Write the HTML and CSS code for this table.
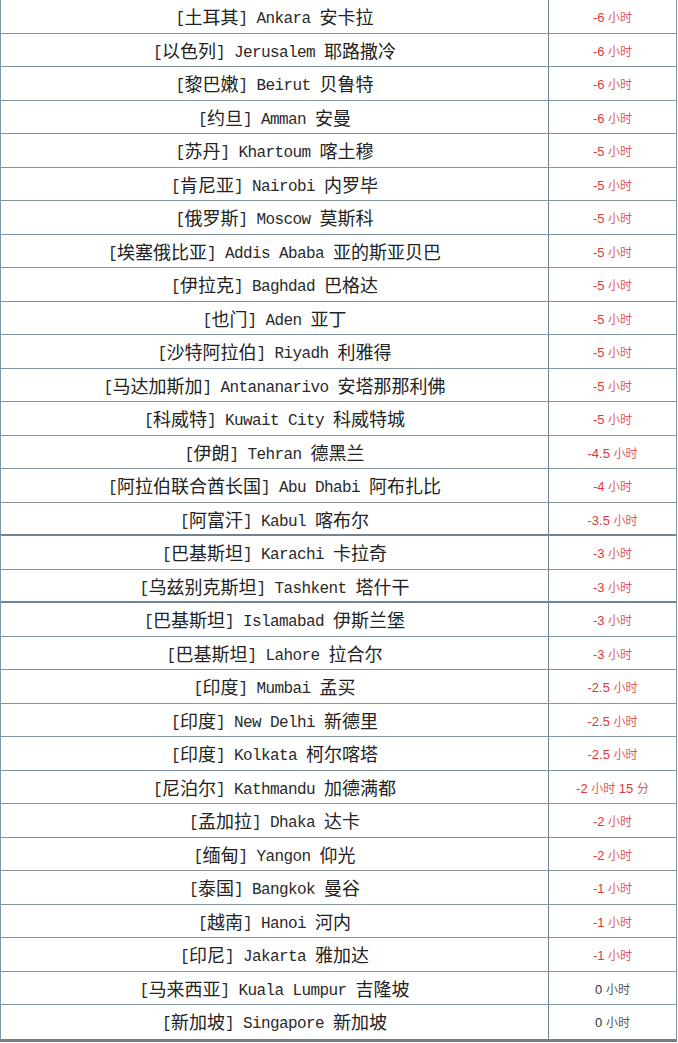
FILE: index.html
```html
<!DOCTYPE html>
<html lang="zh-CN">
<head>
<meta charset="utf-8">
<title>时差表</title>
<link rel="stylesheet" href="styles.css">
</head>
<body>
<div class="table">
  <div class="row"><div class="city"><span class="en">[</span>土耳其<span class="en">] Ankara </span>安卡拉</div><div class="diff">-6 <span class="cn">小时</span></div></div>
  <div class="row"><div class="city"><span class="en">[</span>以色列<span class="en">] Jerusalem </span>耶路撒冷</div><div class="diff">-6 <span class="cn">小时</span></div></div>
  <div class="row"><div class="city"><span class="en">[</span>黎巴嫩<span class="en">] Beirut </span>贝鲁特</div><div class="diff">-6 <span class="cn">小时</span></div></div>
  <div class="row"><div class="city"><span class="en">[</span>约旦<span class="en">] Amman </span>安曼</div><div class="diff">-6 <span class="cn">小时</span></div></div>
  <div class="row"><div class="city"><span class="en">[</span>苏丹<span class="en">] Khartoum </span>喀土穆</div><div class="diff">-5 <span class="cn">小时</span></div></div>
  <div class="row"><div class="city"><span class="en">[</span>肯尼亚<span class="en">] Nairobi </span>内罗毕</div><div class="diff">-5 <span class="cn">小时</span></div></div>
  <div class="row"><div class="city"><span class="en">[</span>俄罗斯<span class="en">] Moscow </span>莫斯科</div><div class="diff">-5 <span class="cn">小时</span></div></div>
  <div class="row"><div class="city"><span class="en">[</span>埃塞俄比亚<span class="en">] Addis Ababa </span>亚的斯亚贝巴</div><div class="diff">-5 <span class="cn">小时</span></div></div>
  <div class="row"><div class="city"><span class="en">[</span>伊拉克<span class="en">] Baghdad </span>巴格达</div><div class="diff">-5 <span class="cn">小时</span></div></div>
  <div class="row"><div class="city"><span class="en">[</span>也门<span class="en">] Aden </span>亚丁</div><div class="diff">-5 <span class="cn">小时</span></div></div>
  <div class="row"><div class="city"><span class="en">[</span>沙特阿拉伯<span class="en">] Riyadh </span>利雅得</div><div class="diff">-5 <span class="cn">小时</span></div></div>
  <div class="row"><div class="city"><span class="en">[</span>马达加斯加<span class="en">] Antananarivo </span>安塔那那利佛</div><div class="diff">-5 <span class="cn">小时</span></div></div>
  <div class="row"><div class="city"><span class="en">[</span>科威特<span class="en">] Kuwait City </span>科威特城</div><div class="diff">-5 <span class="cn">小时</span></div></div>
  <div class="row"><div class="city"><span class="en">[</span>伊朗<span class="en">] Tehran </span>德黑兰</div><div class="diff">-4.5 <span class="cn">小时</span></div></div>
  <div class="row"><div class="city"><span class="en">[</span>阿拉伯联合酋长国<span class="en">] Abu Dhabi </span>阿布扎比</div><div class="diff">-4 <span class="cn">小时</span></div></div>
  <div class="row thick"><div class="city"><span class="en">[</span>阿富汗<span class="en">] Kabul </span>喀布尔</div><div class="diff">-3.5 <span class="cn">小时</span></div></div>
  <div class="row"><div class="city"><span class="en">[</span>巴基斯坦<span class="en">] Karachi </span>卡拉奇</div><div class="diff">-3 <span class="cn">小时</span></div></div>
  <div class="row thick"><div class="city"><span class="en">[</span>乌兹别克斯坦<span class="en">] Tashkent </span>塔什干</div><div class="diff">-3 <span class="cn">小时</span></div></div>
  <div class="row"><div class="city"><span class="en">[</span>巴基斯坦<span class="en">] Islamabad </span>伊斯兰堡</div><div class="diff">-3 <span class="cn">小时</span></div></div>
  <div class="row"><div class="city"><span class="en">[</span>巴基斯坦<span class="en">] Lahore </span>拉合尔</div><div class="diff">-3 <span class="cn">小时</span></div></div>
  <div class="row"><div class="city"><span class="en">[</span>印度<span class="en">] Mumbai </span>孟买</div><div class="diff">-2.5 <span class="cn">小时</span></div></div>
  <div class="row"><div class="city"><span class="en">[</span>印度<span class="en">] New Delhi </span>新德里</div><div class="diff">-2.5 <span class="cn">小时</span></div></div>
  <div class="row"><div class="city"><span class="en">[</span>印度<span class="en">] Kolkata </span>柯尔喀塔</div><div class="diff">-2.5 <span class="cn">小时</span></div></div>
  <div class="row"><div class="city"><span class="en">[</span>尼泊尔<span class="en">] Kathmandu </span>加德满都</div><div class="diff">-2 <span class="cn">小时</span> 15 <span class="cn">分</span></div></div>
  <div class="row"><div class="city"><span class="en">[</span>孟加拉<span class="en">] Dhaka </span>达卡</div><div class="diff">-2 <span class="cn">小时</span></div></div>
  <div class="row"><div class="city"><span class="en">[</span>缅甸<span class="en">] Yangon </span>仰光</div><div class="diff">-2 <span class="cn">小时</span></div></div>
  <div class="row"><div class="city"><span class="en">[</span>泰国<span class="en">] Bangkok </span>曼谷</div><div class="diff">-1 <span class="cn">小时</span></div></div>
  <div class="row"><div class="city"><span class="en">[</span>越南<span class="en">] Hanoi </span>河内</div><div class="diff">-1 <span class="cn">小时</span></div></div>
  <div class="row"><div class="city"><span class="en">[</span>印尼<span class="en">] Jakarta </span>雅加达</div><div class="diff">-1 <span class="cn">小时</span></div></div>
  <div class="row"><div class="city"><span class="en">[</span>马来西亚<span class="en">] Kuala Lumpur </span>吉隆坡</div><div class="diff zero">0 <span class="cn">小时</span></div></div>
  <div class="row last"><div class="city"><span class="en">[</span>新加坡<span class="en">] Singapore </span>新加坡</div><div class="diff zero">0 <span class="cn">小时</span></div></div>
</div>
</body>
</html>
```

FILE: styles.css
```css
html, body {
  margin: 0;
  padding: 0;
  background: #ffffff;
}

.table {
  width: 677px;
  box-sizing: border-box;
  border-left: 1px solid #8197a8;
  border-right: 1px solid #8197a8;
  border-bottom: 3px solid #6f7f8a;
}

.row {
  display: grid;
  grid-template-columns: 548px 127px;
  height: 33.5px;
  box-sizing: border-box;
  border-bottom: 1px solid #8197a8;
}

.row.thick {
  border-bottom: 2px solid #6f8494;
}

.row.last {
  border-bottom: none;
}

.city {
  display: block;
  text-align: center;
  line-height: 33px;
  border-right: 1px solid #6f8494;
  font-family: "Noto Sans CJK SC", "Noto Sans", sans-serif;
  font-size: 18px;
  color: #222222;
  white-space: pre;
  overflow: hidden;
}

.en {
  font-family: "Liberation Mono", "DejaVu Sans Mono", monospace;
  font-size: 16px;
  letter-spacing: -0.6px;
  color: #2a2a2a;
  position: relative;
  top: -1px;
}

.diff {
  display: block;
  text-align: center;
  line-height: 33px;
  font-family: "Liberation Sans", Arial, sans-serif;
  font-size: 13px;
  color: #e0383a;
  white-space: pre;
  overflow: hidden;
}

.diff .cn {
  font-family: "Noto Sans CJK SC", sans-serif;
  font-size: 12px;
  color: #e05a5c;
}

.diff.zero {
  color: #333333;
}

.diff.zero .cn {
  color: #555555;
}
```
